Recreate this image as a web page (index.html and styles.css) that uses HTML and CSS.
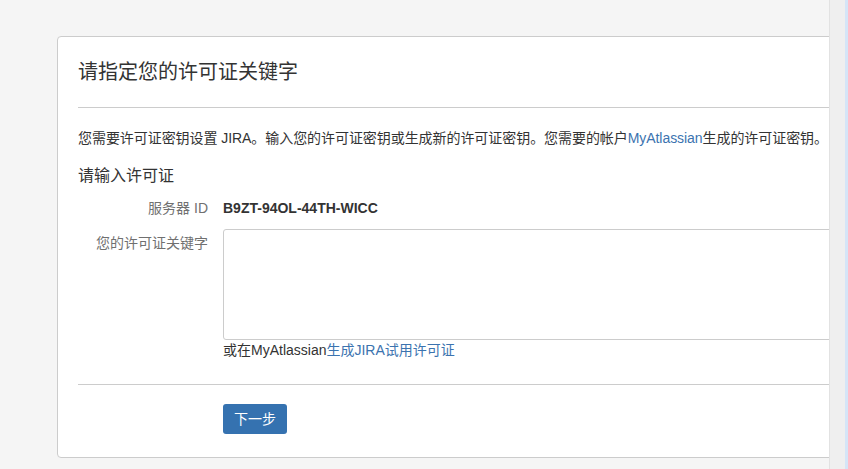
FILE: index.html
```html
<!DOCTYPE html>
<html lang="zh-CN">
<head>
<meta charset="utf-8">
<title>请指定您的许可证关键字</title>
<link rel="stylesheet" href="styles.css">
</head>
<body>
<div class="viewport">
  <div class="card">
    <div class="card-header">
      <h1 class="title">请指定您的许可证关键字</h1>
    </div>
    <p class="desc">您需要许可证密钥设置 JIRA。输入您的许可证密钥或生成新的许可证密钥。您需要的帐户<a class="link" href="#">MyAtlassian</a>生成的许可证密钥。</p>
    <h2 class="subtitle">请输入许可证</h2>
    <div class="row row-server">
      <div class="label">服务器 ID</div>
      <div class="value">B9ZT-94OL-44TH-WICC</div>
    </div>
    <div class="row row-key">
      <div class="label label-key">您的许可证关键字</div>
      <div class="field">
        <textarea class="textarea"></textarea>
        <div class="help">或在MyAtlassian<a class="link" href="#">生成JIRA试用许可证</a></div>
      </div>
    </div>
    <div class="actions">
      <button class="btn" type="button">下一步</button>
    </div>
  </div>
</div>
<div class="scrollbar"></div>
</body>
</html>
```

FILE: styles.css
```css
html, body {
  margin: 0;
  padding: 0;
}
body {
  display: flex;
  width: 848px;
  height: 469px;
  overflow: hidden;
  background: #f5f5f5;
  font-family: "Liberation Sans", Arial, "Noto Sans CJK SC", sans-serif;
  font-size: 14px;
  color: #333;
}
.viewport {
  flex: 1;
  overflow: hidden;
  padding: 36px 0 0 57px;
}
.scrollbar {
  width: 15px;
  background: #efefef;
  border-left: 1px solid #e2e2e2;
  border-right: 3px solid #d5e5f7;
}
.card {
  width: 900px;
  box-sizing: border-box;
  background: #fff;
  border: 1px solid #ccc;
  border-radius: 4px;
  padding: 0 20px 23px 20px;
}
.card-header {
  padding: 20px 0 20px 0;
  border-bottom: 1px solid #ccc;
}
.title {
  margin: 0;
  font-size: 20px;
  font-weight: normal;
  line-height: 30px;
  color: #333;
}
.desc {
  margin: 20px 0 0 0;
  width: max-content;
  line-height: 20px;
  font-size: 14px;
  letter-spacing: -0.06px;
  white-space: nowrap;
}
.link {
  color: #3b73af;
  text-decoration: none;
}
.subtitle {
  margin: 16px 0 0 0;
  font-size: 16px;
  font-weight: normal;
  line-height: 24px;
  color: #333;
}
.row {
  display: flex;
  gap: 15px;
}
.row-server {
  margin-top: 10px;
  line-height: 20px;
}
.row-key {
  margin-top: 11px;
}
.label {
  width: 130px;
  flex: none;
  text-align: right;
  color: #707070;
  line-height: 20px;
}
.label-key {
  padding-top: 4px;
}
.value {
  font-weight: bold;
  color: #333;
}
.field {
  flex: none;
  width: 640px;
}
.textarea {
  display: block;
  box-sizing: border-box;
  width: 640px;
  height: 111px;
  margin: 0;
  border: 1px solid #ccc;
  border-radius: 3px;
  background: #fff;
  resize: none;
  font: inherit;
}
.help {
  line-height: 20px;
  color: #333;
}
.actions {
  margin-top: 24px;
  border-top: 1px solid #ccc;
  padding: 19px 0 0 145px;
}
.btn {
  display: block;
  width: 64px;
  height: 30px;
  margin: 0;
  padding: 0;
  border: 0;
  border-radius: 3px;
  background: #3572b0;
  color: #fff;
  font-family: "Liberation Sans", Arial, "Noto Sans CJK SC", sans-serif;
  font-size: 14px;
  line-height: 30px;
  text-align: center;
}
```
